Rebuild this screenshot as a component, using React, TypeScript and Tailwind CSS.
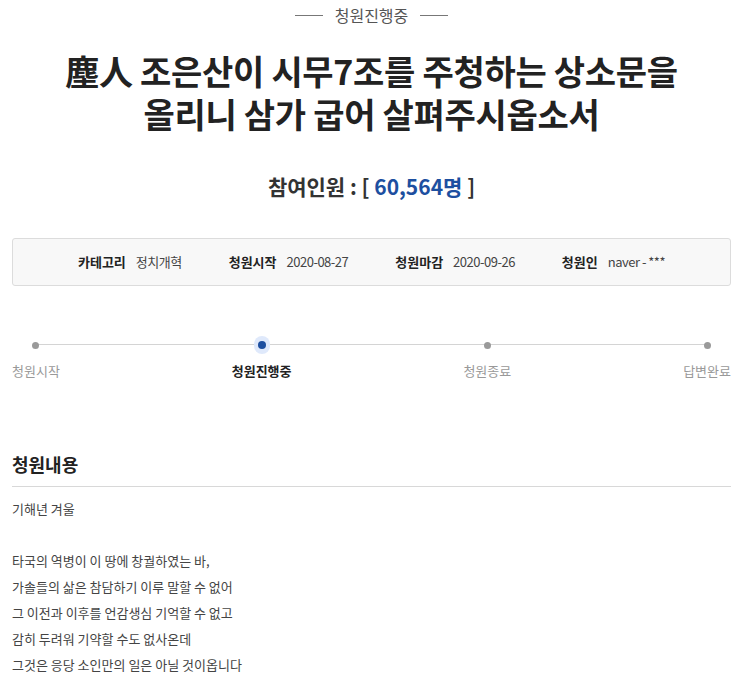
const font = { fontFamily: '"Noto Sans CJK KR", "Noto Sans", sans-serif' };

const steps = [
  { label: "청원시작", active: false },
  { label: "청원진행중", active: true },
  { label: "청원종료", active: false },
  { label: "답변완료", active: false },
];

const info = [
  { k: "카테고리", v: "정치개혁" },
  { k: "청원시작", v: "2020-08-27" },
  { k: "청원마감", v: "2020-09-26" },
  { k: "청원인", v: "naver - ***" },
];

const lines = [
  "타국의 역병이 이 땅에 창궐하였는 바,",
  "가솔들의 삶은 참담하기 이루 말할 수 없어",
  "그 이전과 이후를 언감생심 기억할 수 없고",
  "감히 두려워 기약할 수도 없사온데",
  "그것은 응당 소인만의 일은 아닐 것이옵니다",
];

export default function App() {
  return (
    <div className="min-h-screen w-[743px] overflow-hidden bg-white px-3 text-[#333]" style={font}>
      {/* status */}
      <div className="flex items-center justify-center gap-3 pt-[3px] text-[16px] leading-6 text-[#555]">
        <span className="h-px w-[28px] bg-[#777]" />
        <span>청원진행중</span>
        <span className="h-px w-[28px] bg-[#777]" />
      </div>

      <h1 className="mt-[22px] text-center text-[34px] font-bold leading-[43px] tracking-[-0.3px] text-[#222]">
        塵人 조은산이 시무7조를 주청하는 상소문을
        <br />
        올리니 삼가 굽어 살펴주시옵소서
      </h1>

      <div className="mt-[37px] text-center text-[21px] font-bold leading-7 text-[#333]">
        참여인원 : [ <span className="text-[#1d4fa0]">60,564명</span> ]
      </div>

      {/* info box */}
      <div className="mt-[38px] flex h-[48px] items-center justify-center gap-[47px] rounded-[3px] border border-[#dcdcdc] bg-[#f8f8f8] text-[13px] text-[#333]">
        {info.map((i) => (
          <div key={i.k} className="flex items-center gap-[10px]">
            <span className="font-bold text-[#222]">{i.k}</span>
            <span className="tracking-[-0.5px] text-[#444]">{i.v}</span>
          </div>
        ))}
      </div>

      {/* progress */}
      <div className="relative mt-[51px] flex justify-between">
        <div className="absolute left-[23px] right-[23px] top-[7px] h-px bg-[#d4d4d4]" />
        {steps.map((s) => (
          <div key={s.label} className="relative flex flex-col items-center">
            <div className="flex h-[16px] w-[16px] items-center justify-center">
              {s.active ? (
                <span className="flex h-[18px] w-[18px] items-center justify-center rounded-full bg-[#dfe9fb]">
                  <span className="h-[8px] w-[8px] rounded-full bg-[#1d4fa0]" />
                </span>
              ) : (
                <span className="h-[7px] w-[7px] rounded-full bg-[#9a9a9a]" />
              )}
            </div>
            <span
              className={
                "mt-[8px] text-[13px] leading-5 " +
                (s.active ? "font-bold text-[#222]" : "text-[#999]")
              }
            >
              {s.label}
            </span>
          </div>
        ))}
      </div>

      {/* content */}
      <div className="mt-[71px] border-b border-[#d8d8d8] pb-[10px] text-[18px] font-bold leading-6 text-[#222]">
        청원내용
      </div>
      <div className="pt-[9px] text-[13px] leading-[26px] text-[#444]">
        <p>기해년 겨울</p>
        <p>&nbsp;</p>
        {lines.map((l) => (
          <p key={l}>{l}</p>
        ))}
      </div>
    </div>
  );
}
